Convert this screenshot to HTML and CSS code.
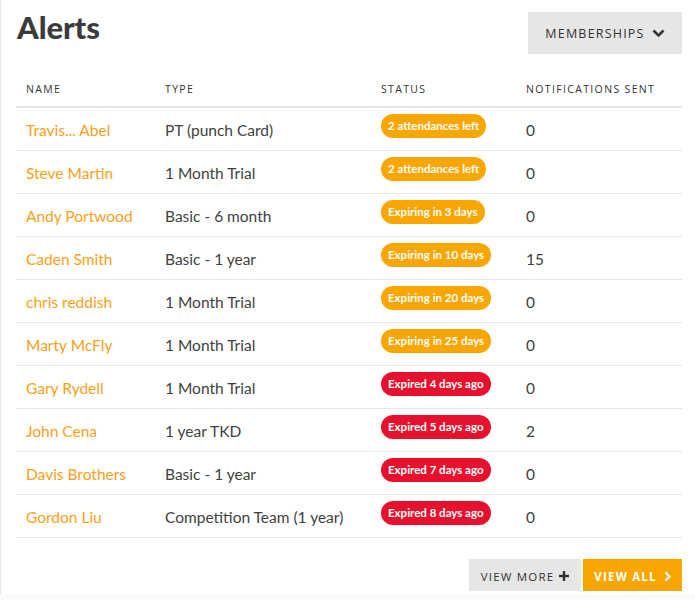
FILE: index.html
```html
<!DOCTYPE html>
<html lang="en">
<head>
  <meta charset="UTF-8">
  <title>Alerts</title>
  <link rel="stylesheet" href="styles.css">
</head>
<body>
  <div class="card">
    <div class="card-head">
      <h1>Alerts</h1>
      <button class="btn btn-grey btn-menu">MEMBERSHIPS
        <svg width="13" height="9" viewBox="0 0 13 9"><path d="M1.5 1.5 L6.5 6.5 L11.5 1.5" fill="none" stroke="#333" stroke-width="2.6"/></svg>
      </button>
    </div>

    <table class="alerts">
      <thead>
        <tr>
          <th class="col-name">Name</th>
          <th class="col-type">Type</th>
          <th class="col-status">Status</th>
          <th>Notifications Sent</th>
        </tr>
      </thead>
      <tbody>
        <tr><td class="name">Travis... Abel</td><td>PT (punch Card)</td><td><span class="badge warn">2 attendances left</span></td><td>0</td></tr>
        <tr><td class="name">Steve Martin</td><td>1 Month Trial</td><td><span class="badge warn">2 attendances left</span></td><td>0</td></tr>
        <tr><td class="name">Andy Portwood</td><td>Basic - 6 month</td><td><span class="badge warn">Expiring in 3 days</span></td><td>0</td></tr>
        <tr><td class="name">Caden Smith</td><td>Basic - 1 year</td><td><span class="badge warn">Expiring in 10 days</span></td><td>15</td></tr>
        <tr><td class="name">chris reddish</td><td>1 Month Trial</td><td><span class="badge warn">Expiring in 20 days</span></td><td>0</td></tr>
        <tr><td class="name">Marty McFly</td><td>1 Month Trial</td><td><span class="badge warn">Expiring in 25 days</span></td><td>0</td></tr>
        <tr><td class="name">Gary Rydell</td><td>1 Month Trial</td><td><span class="badge danger">Expired 4 days ago</span></td><td>0</td></tr>
        <tr><td class="name">John Cena</td><td>1 year TKD</td><td><span class="badge danger">Expired 5 days ago</span></td><td>2</td></tr>
        <tr><td class="name">Davis Brothers</td><td>Basic - 1 year</td><td><span class="badge danger">Expired 7 days ago</span></td><td>0</td></tr>
        <tr><td class="name">Gordon Liu</td><td>Competition Team (1 year)</td><td><span class="badge danger">Expired 8 days ago</span></td><td>0</td></tr>
      </tbody>
    </table>

    <div class="card-foot">
      <button class="btn btn-grey">VIEW MORE
        <svg width="10" height="10" viewBox="0 0 10 10"><path d="M5 0 V10 M0 5 H10" stroke="#333" stroke-width="2.4"/></svg>
      </button>
      <button class="btn btn-orange">VIEW ALL
        <svg width="7" height="11" viewBox="0 0 7 11"><path d="M1.3 1.2 L5.5 5.5 L1.3 9.8" fill="none" stroke="#fff" stroke-width="2.2"/></svg>
      </button>
    </div>
  </div>
</body>
</html>
```

FILE: styles.css
```css
* {
  margin: 0;
  padding: 0;
  box-sizing: border-box;
}
body {
  background: #fafafa;
  font-family: 'Lato', 'Open Sans', Arial, sans-serif;
  color: #444;
}
.card {
  background: #fff;
  border-left: 1px solid #e6e6e6;
  padding: 12px 13px 3px 15px;
}
.card-head {
  display: flex;
  justify-content: space-between;
  align-items: flex-start;
}
h1 {
  font-family: 'Lato', sans-serif;
  font-size: 31px;
  font-weight: 900;
  color: #3b3b3b;
  margin: -5px 0 0 1px;
  line-height: 40px;
  letter-spacing: -0.1px;
}
.btn {
  border: none;
  display: flex;
  align-items: center;
  justify-content: center;
  white-space: nowrap;
  gap: 6px;
  font-family: 'Open Sans', Arial, sans-serif;
  letter-spacing: 1.2px;
  cursor: pointer;
}
.btn-grey {
  background: #e6e6e6;
  color: #333;
}
.btn-orange {
  background: #f9a600;
  color: #fff;
  font-weight: 700;
}
.btn-menu {
  width: 154px;
  height: 42px;
  font-size: 12.5px;
  gap: 7px;
}
.alerts {
  width: 100%;
  border-collapse: collapse;
  margin-top: 17px;
}
.alerts th {
  text-align: left;
  font-family: 'Open Sans', Arial, sans-serif;
  font-weight: 400;
  font-size: 10.5px;
  letter-spacing: 1.35px;
  text-transform: uppercase;
  color: #333;
  height: 36px;
  padding: 0 10px;
  border-bottom: 2px solid #e6e6e6;
}
.col-name { width: 139px; }
.col-type { width: 216px; }
.col-status { width: 145px; }
.alerts td {
  height: 43px;
  padding: 3px 10px 0 10px;
  font-size: 15.5px;
  color: #3f3f3f;
  border-bottom: 1px solid #e6e6e6;
  white-space: nowrap;
}
.alerts td.name {
  color: #f6a11a;
}
.badge {
  display: inline-block;
  position: relative;
  top: -4px;
  height: 24px;
  line-height: 24px;
  padding: 0 7px;
  border-radius: 12px;
  color: #fff;
  font-size: 11.5px;
  font-weight: 700;
}
.badge.warn { background: #f9a600; }
.badge.danger { background: #e8112d; }
.card-foot {
  display: flex;
  justify-content: flex-end;
  gap: 2px;
  margin-top: 21px;
}
.card-foot .btn {
  height: 32px;
  padding-top: 3px;
  font-size: 11.5px;
}
.card-foot .btn-grey { width: 112px; gap: 5px; }
.card-foot .btn-orange { width: 99px; gap: 7px; }
```
